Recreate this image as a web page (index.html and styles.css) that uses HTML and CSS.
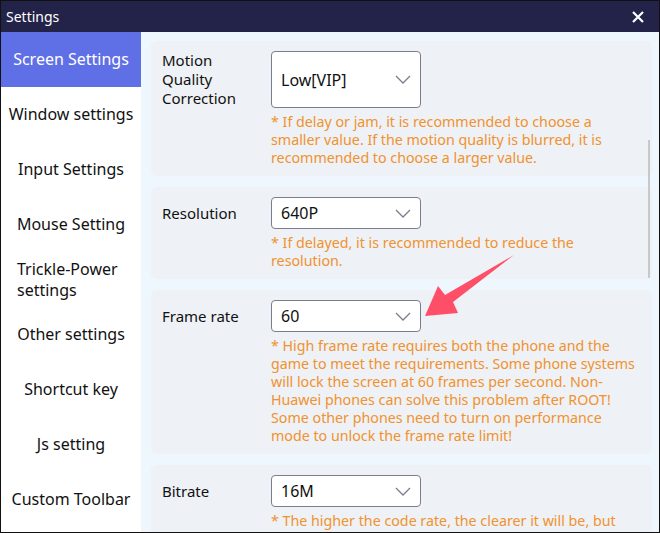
FILE: index.html
```html
<!DOCTYPE html>
<html>
<head>
<meta charset="utf-8">
<link rel="stylesheet" href="styles.css">
</head>
<body>
<div class="window">
  <div class="titlebar">
    <span class="title">Settings</span>
    <svg class="close" width="14" height="14" viewBox="0 0 14 14"><path d="M2 2 L12 12 M12 2 L2 12" stroke="#fff" stroke-width="2.2" fill="none"/></svg>
  </div>
  <div class="body">
    <nav class="sidebar">
      <div class="nav-item active"><span>Screen Settings</span></div>
      <div class="nav-item"><span>Window settings</span></div>
      <div class="nav-item"><span>Input Settings</span></div>
      <div class="nav-item"><span>Mouse Setting</span></div>
      <div class="nav-item"><span class="wrap">Trickle-Power settings</span></div>
      <div class="nav-item"><span>Other settings</span></div>
      <div class="nav-item"><span>Shortcut key</span></div>
      <div class="nav-item"><span>Js setting</span></div>
      <div class="nav-item"><span>Custom Toolbar</span></div>
    </nav>
    <main class="content">
      <section class="card">
        <div class="row">
          <div class="label">Motion Quality Correction</div>
          <div class="select"><span>Low[VIP]</span><svg class="chev" width="16" height="9" viewBox="0 0 16 9"><path d="M1 1 L8 8 L15 1" stroke="#7b7d8c" stroke-width="1.3" fill="none"/></svg></div>
        </div>
        <p class="hint">* If delay or jam, it is recommended to choose a smaller value. If the motion quality is blurred, it is recommended to choose a larger value.</p>
      </section>
      <section class="card">
        <div class="row">
          <div class="label">Resolution</div>
          <div class="select"><span>640P</span><svg class="chev" width="16" height="9" viewBox="0 0 16 9"><path d="M1 1 L8 8 L15 1" stroke="#7b7d8c" stroke-width="1.3" fill="none"/></svg></div>
        </div>
        <p class="hint">* If delayed, it is recommended to reduce the resolution.</p>
      </section>
      <section class="card">
        <div class="row">
          <div class="label">Frame rate</div>
          <div class="select"><span>60</span><svg class="chev" width="16" height="9" viewBox="0 0 16 9"><path d="M1 1 L8 8 L15 1" stroke="#7b7d8c" stroke-width="1.3" fill="none"/></svg></div>
        </div>
        <p class="hint">* High frame rate requires both the phone and the game to meet the requirements. Some phone systems will lock the screen at 60 frames per second. Non-Huawei phones can solve this problem after ROOT! Some other phones need to turn on performance mode to unlock the frame rate limit!</p>
      </section>
      <section class="card">
        <div class="row">
          <div class="label">Bitrate</div>
          <div class="select"><span>16M</span><svg class="chev" width="16" height="9" viewBox="0 0 16 9"><path d="M1 1 L8 8 L15 1" stroke="#7b7d8c" stroke-width="1.3" fill="none"/></svg></div>
        </div>
        <p class="hint">* The higher the code rate, the clearer it will be, but the more bandwidth it will take up.</p>
      </section>
      <div class="scrollbar"></div>
    </main>
  </div>
  <svg class="arrow" width="660" height="533" viewBox="0 0 660 533"><polygon points="514,255 453,302 458,313 425,316 438,286 445,295" fill="#ff4f68"/></svg>
</div>
</body>
</html>
```
FILE: styles.css
```css
* { box-sizing: border-box; }
html, body { margin: 0; padding: 0; }
body {
  width: 660px;
  height: 533px;
  overflow: hidden;
  font-family: "Noto Sans", "Open Sans", sans-serif;
  background: #fff;
}
.window {
  position: relative;
  width: 660px;
  height: 533px;
  border: 1px solid #111;
  display: flex;
  flex-direction: column;
  overflow: hidden;
}
.titlebar {
  height: 31px;
  flex: none;
  background: #23234a;
  display: flex;
  align-items: center;
  justify-content: space-between;
  padding: 0 14px 0 5px;
}
.title {
  color: #fff;
  font-size: 14px;
}
.close { display: block; }
.body {
  flex: 1;
  display: flex;
  min-height: 0;
}
.sidebar {
  width: 140px;
  flex: none;
  background: #fff;
  display: flex;
  flex-direction: column;
}
.nav-item {
  height: 55px;
  flex: none;
  display: flex;
  align-items: center;
  justify-content: center;
  font-size: 16px;
  line-height: 21px;
  color: #111;
}
.nav-item span { max-width: 136px; text-align: left; white-space: nowrap; }
.nav-item span.wrap { max-width: 108px; white-space: normal; }
.nav-item.active { background: #5f6fe6; color: #fff; }
.content {
  position: relative;
  flex: 1;
  background: #eef6fe;
  padding: 9px 7px 0 10px;
  display: flex;
  flex-direction: column;
  gap: 11px;
  overflow: hidden;
}
.card {
  flex: none;
  background: #eef1f5;
  border-radius: 6px;
  padding: 10px 10px 9px 11px;
}
.row {
  display: flex;
  align-items: stretch;
}
.label {
  width: 109px;
  flex: none;
  display: flex;
  align-items: center;
  font-size: 15px;
  line-height: 19px;
  color: #111;
  padding-right: 10px;
}
.select {
  width: 150px;
  min-height: 32px;
  background: #fff;
  border: 1px solid #7b7d8c;
  border-radius: 4px;
  display: flex;
  align-items: center;
  justify-content: space-between;
  padding: 0 9px 0 9px;
  font-size: 16px;
  color: #111;
}
.chev { display: block; }
.hint {
  width: 367px;
  margin: 5px 0 0 109px;
  font-size: 14.25px;
  line-height: 18px;
  color: #f1922e;
}
.scrollbar {
  position: absolute;
  right: 9px;
  top: 108px;
  width: 2px;
  height: 138px;
  background: #c6c8ca;
}
.arrow {
  position: absolute;
  left: -1px;
  top: -1px;
  pointer-events: none;
}
```
